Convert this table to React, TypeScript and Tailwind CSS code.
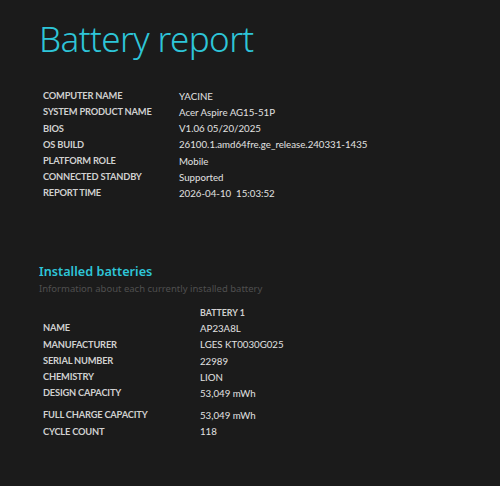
import React from "react";

const sys: [string, string][] = [
  ["COMPUTER NAME", "YACINE"],
  ["SYSTEM PRODUCT NAME", "Acer Aspire AG15-51P"],
  ["BIOS", "V1.06 05/20/2025"],
  ["OS BUILD", "26100.1.amd64fre.ge_release.240331-1435"],
  ["PLATFORM ROLE", "Mobile"],
  ["CONNECTED STANDBY", "Supported"],
  ["REPORT TIME", "2026-04-10\u00a0\u00a015:03:52"],
];

const bat: [string, string][] = [
  ["NAME", "AP23A8L"],
  ["MANUFACTURER", "LGES KT0030G025"],
  ["SERIAL NUMBER", "22989"],
  ["CHEMISTRY", "LION"],
  ["DESIGN CAPACITY", "53,049 mWh"],
];

const bat2: [string, string][] = [
  ["FULL CHARGE CAPACITY", "53,049 mWh"],
  ["CYCLE COUNT", "118"],
];

function Row({ k, v, w }: { k: string; v: string; w: string }) {
  return (
    <div className="flex h-[16.2px] items-center">
      <div className={`${w} shrink-0 font-['Lato',sans-serif] text-[9.3px] font-bold tracking-[-0.2px] text-[#d0d0d0]`}>{k}</div>
      <div className="font-['Lato',sans-serif] text-[9.7px] text-[#e2e2e2]">{v}</div>
    </div>
  );
}

export default function App() {
  return (
    <div
      className="w-[500px] h-[486px] bg-[#1b1b1b] overflow-hidden"
      style={{ fontFamily: '"Noto Sans", "Open Sans", sans-serif' }}
    >
      <div className="pl-[39px] pt-[15px] text-[35px] font-light leading-[48px] text-[#2ec5d8] tracking-[-0.6px]">
        Battery report
      </div>
      <div className="pl-[43px] pt-[25px]">
        {sys.map(([k, v]) => (
          <Row key={k} k={k} v={v} w="w-[136px]" />
        ))}
      </div>
      <div className="pl-[39px] pt-[62px]">
        <div className="text-[12.7px] font-semibold leading-[16px] text-[#2ec5d8]">Installed batteries</div>
        <div className="pt-[2px] text-[9.5px] leading-[15px] text-[#4f4f4f]">Information about each currently installed battery</div>
      </div>
      <div className="pl-[43px] pt-[8px]">
        <div className="flex h-[16px] items-center">
          <div className="w-[157px] shrink-0" />
          <div className="font-['Lato',sans-serif] text-[8.8px] font-bold text-[#d0d0d0]">BATTERY 1</div>
        </div>
        {bat.map(([k, v]) => (
          <Row key={k} k={k} v={v} w="w-[157px]" />
        ))}
        <div className="h-[6px]" />
        {bat2.map(([k, v]) => (
          <Row key={k} k={k} v={v} w="w-[157px]" />
        ))}
      </div>
    </div>
  );
}
